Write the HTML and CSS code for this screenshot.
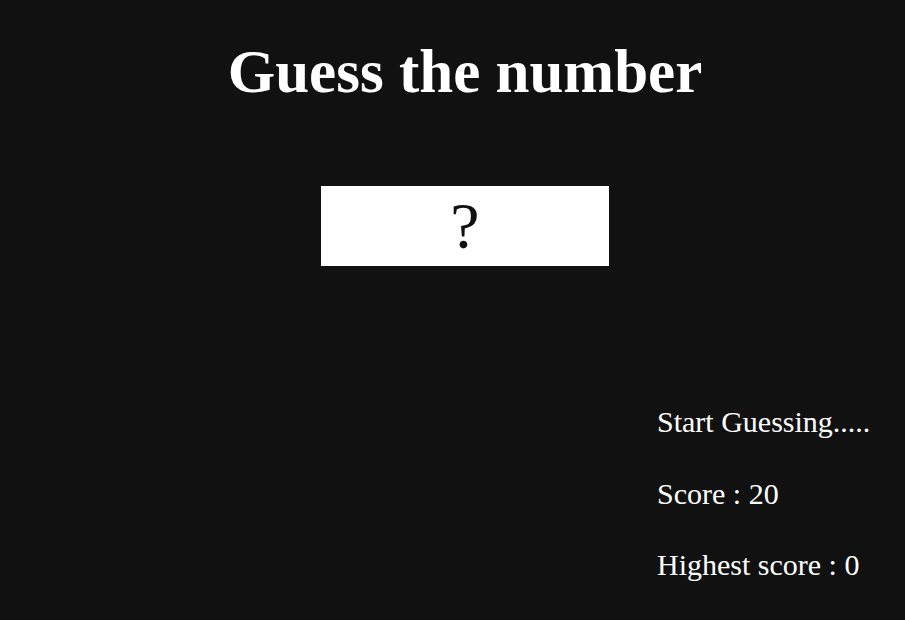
FILE: index.html
```html
<!DOCTYPE html>
<html lang="en">
<head>
<meta charset="utf-8">
<title>Guess the number</title>
<link rel="stylesheet" href="styles.css">
</head>
<body>
<header class="header">
  <h1 class="title">Guess the number</h1>
  <div class="number">?</div>
</header>
<main class="main">
  <section class="right">
    <p class="message">Start Guessing.....</p>
    <p class="label-score">Score : <span class="score">20</span></p>
    <p class="label-highscore">Highest score : <span class="highscore">0</span></p>
  </section>
</main>
</body>
</html>
```

FILE: styles.css
```css
* { box-sizing: border-box; }
html, body { margin: 0; padding: 0; }
body {
  background-color: #111111;
  color: #ffffff;
  font-family: "Liberation Serif", "Times New Roman", serif;
  height: 620px;
  overflow: hidden;
}
.header {
  display: flex;
  flex-direction: column;
  align-items: center;
  padding-top: 37px;
  padding-left: 25px;
}
.title {
  margin: 0;
  font-size: 61px;
  font-weight: bold;
  line-height: 70px;
}
.number {
  margin-top: 79px;
  width: 288px;
  height: 80px;
  background: #ffffff;
  color: #111111;
  font-size: 66px;
  display: flex;
  align-items: center;
  justify-content: center;
}
.main {
  display: flex;
  justify-content: flex-end;
  padding-top: 137px;
}
.right {
  width: 248px;
}
.right p {
  margin: 0 0 34.5px 0;
  font-size: 30px;
  line-height: 37px;
}
```
